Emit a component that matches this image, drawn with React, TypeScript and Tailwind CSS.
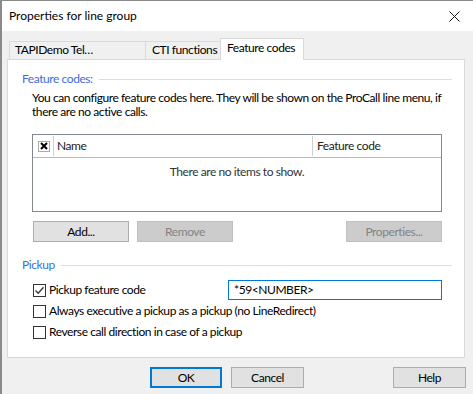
import React from 'react';

const font = { fontFamily: 'Lato, "Noto Sans", sans-serif' };

const Button = ({ label, disabled, primary, className = '' }: { label: string; disabled?: boolean; primary?: boolean; className?: string }) => (
  <div
    className={
      'flex items-center justify-center h-[21px] text-[12px] ' +
      (disabled
        ? 'bg-[#cccccc] border border-[#bfbfbf] text-[#838383] '
        : primary
          ? 'bg-[#e1e1e1] border-2 border-[#0078d7] text-black '
          : 'bg-[#e1e1e1] border border-[#adadad] text-black ') +
      className
    }
  >
    {label}
  </div>
);

const CheckBox = ({ checked }: { checked?: boolean }) => (
  <div className="w-[13px] h-[13px] border border-[#333333] bg-white flex items-center justify-center shrink-0">
    {checked && (
      <svg width="11" height="11" viewBox="0 0 11 11">
        <path d="M1.5 5.5 L4.2 8.2 L9.5 2.2" stroke="#333" strokeWidth="1.3" fill="none" />
      </svg>
    )}
  </div>
);

const GroupLabel = ({ text }: { text: string }) => (
  <div className="flex items-center gap-[6px] h-[14px]">
    <span className="text-[#3c6ddb] text-[12px] leading-[14px] whitespace-nowrap">{text}</span>
    <div className="flex-1 h-px bg-[#d5dfe5]" />
  </div>
);

export default function App() {
  return (
    <div className="w-[473px] h-[394px] bg-[#f0f0f0] border-l-2 border-t border-[#8a8a8a] flex flex-col text-black whitespace-nowrap tracking-[-0.43px]" style={font}>
      {/* title bar */}
      <div className="h-[30px] bg-white flex items-center justify-between pl-[7px] pr-[13px] shrink-0 tracking-normal">
        <span className="text-[12px]">Properties for line group</span>
        <svg width="11" height="11" viewBox="0 0 11 11">
          <path d="M0.5 0.5 L10.5 10.5 M10.5 0.5 L0.5 10.5" stroke="#111" strokeWidth="1" />
        </svg>
      </div>

      {/* tabs */}
      <div className="flex items-end pl-[7px] pt-[6px] h-[28px] shrink-0 relative z-10">
        <div className="h-[18px] w-[137px] border border-b-0 border-[#d9d9d9] bg-[#f0f0f0] text-[12px] pl-[5px] leading-[16px]">
          TAPIDemo Tel…
        </div>
        <div className="h-[18px] w-[75px] border border-l-0 border-b-0 border-[#d9d9d9] bg-[#f0f0f0] text-[12px] pl-[6px] leading-[16px]">
          CTI functions
        </div>
        <div className="h-[22px] w-[84px] border border-b-0 border-[#d9d9d9] bg-white text-[12px] pl-[6px] leading-[18px] -ml-px -mb-px">
          Feature codes
        </div>
      </div>

      {/* panel */}
      <div className="ml-[5px] w-[458px] h-[299px] border border-[#d9d9d9] bg-white flex flex-col pl-[14px] pr-[12px] pt-[12px] shrink-0">
        <GroupLabel text="Feature codes:" />
        <div className="pl-[10px] pr-[10px] flex flex-col">
          <p className="text-[12px] leading-[14px] mt-[5px]">
            You can configure feature codes here. They will be shown on the ProCall line menu, if
            <br />
            there are no active calls.
          </p>

          {/* list */}
          <div className="mt-[15px] w-[410px] h-[78px] border border-[#828790] flex flex-col">
            <div className="h-[23px] border-b border-[#b9b9b9] flex items-center text-[12px] text-[#222]">
              <div className="w-[19px] flex justify-center pl-[2px]">
                <div className="w-[12px] h-[11px] border border-[#aaaaaa] bg-white flex items-center justify-center">
                  <svg width="8" height="8" viewBox="0 0 8 8">
                    <path d="M1 1 L7 7 M7 1 L1 7" stroke="#000" strokeWidth="2" />
                  </svg>
                </div>
              </div>
              <div className="w-px h-[20px] bg-[#cfcfcf] ml-[1px]" />
              <div className="w-[258px] pl-[3px]">Name</div>
              <div className="w-px h-[20px] bg-[#cfcfcf]" />
              <div className="pl-[4px]">Feature code</div>
            </div>
            <div className="text-center text-[12px] text-[#333] mt-[5px]">There are no items to show.</div>
          </div>

          {/* buttons */}
          <div className="flex mt-[9px] ml-[1px] w-[409px]">
            <Button label="Add..." className="w-[96px]" />
            <Button label="Remove" disabled className="w-[96px] ml-[8px]" />
            <div className="flex-1" />
            <Button label="Properties..." disabled className="w-[96px]" />
          </div>
        </div>

        <div className="mt-[16px]">
          <GroupLabel text="Pickup" />
        </div>

        <div className="pl-[11px] flex flex-col">
          <div className="flex items-center mt-[8px] h-[20px]">
            <CheckBox checked />
            <span className="text-[12px] ml-[3px] w-[179px]">Pickup feature code</span>
            <div className="w-[214px] h-[20px] border border-[#0078d7] bg-white text-[12px] pl-[5px] leading-[18px]">
              *59&lt;NUMBER&gt;
            </div>
          </div>
          <div className="flex items-center mt-[1px] h-[20px]">
            <CheckBox />
            <span className="text-[12px] ml-[3px]">Always executive a pickup as a pickup (no LineRedirect)</span>
          </div>
          <div className="flex items-center mt-[1px] h-[20px]">
            <CheckBox />
            <span className="text-[12px] ml-[3px]">Reverse call direction in case of a pickup</span>
          </div>
        </div>
      </div>

      {/* bottom buttons */}
      <div className="flex mt-[9px] pl-[148px]">
        <Button label="OK" primary className="w-[72px]" />
        <Button label="Cancel" className="w-[73px] ml-[9px]" />
        <Button label="Help" className="w-[73px] ml-[89px]" />
      </div>
    </div>
  );
}
